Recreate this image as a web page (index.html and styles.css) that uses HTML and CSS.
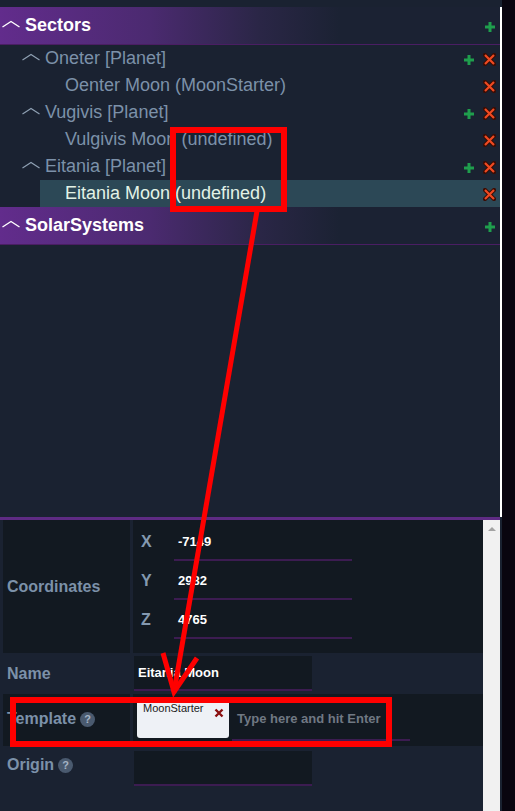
FILE: index.html
```html
<!DOCTYPE html>
<html>
<head>
<meta charset="utf-8">
<link rel="stylesheet" href="styles.css">
</head>
<body>
<div class="app">
  <div class="main">
    <div class="tree">
      <div class="tree-inner">
        <div class="group-head">
          <span class="chev"><svg width="18" height="8" viewBox="0 0 18 8"><polyline points="0.5,7 9,1.5 17.5,7" fill="none" stroke="#ffffff" stroke-width="1.4"/></svg></span>
          <span class="group-title">Sectors</span>
          <span class="actions">
            <svg class="ico" width="12" height="12" viewBox="0 0 12 12"><path d="M6 1v10M1 6h10" stroke="#1f9e4d" stroke-width="3"/></svg>
          </span>
        </div>

        <div class="node lvl1">
          <span class="chev"><svg width="18" height="8" viewBox="0 0 18 8"><polyline points="0.5,7 9,1.5 17.5,7" fill="none" stroke="#8fa0b3" stroke-width="1.2"/></svg></span>
          <span class="node-text">Oneter [Planet]</span>
          <span class="actions">
            <svg class="ico" width="12" height="12" viewBox="0 0 12 12"><path d="M6 1v10M1 6h10" stroke="#1f9e4d" stroke-width="3"/></svg>
            <svg class="ico" width="13" height="13" viewBox="0 0 13 13"><path d="M2 2l9 9M11 2l-9 9" stroke="#3a0d05" stroke-width="4.2" stroke-linecap="square"/><path d="M2 2l9 9M11 2l-9 9" stroke="#ef4a22" stroke-width="2.2"/></svg>
          </span>
        </div>
        <div class="node lvl2">
          <span class="chev"></span>
          <span class="node-text">Oenter Moon (MoonStarter)</span>
          <span class="actions">
            <svg class="ico" width="13" height="13" viewBox="0 0 13 13"><path d="M2 2l9 9M11 2l-9 9" stroke="#3a0d05" stroke-width="4.2" stroke-linecap="square"/><path d="M2 2l9 9M11 2l-9 9" stroke="#ef4a22" stroke-width="2.2"/></svg>
          </span>
        </div>
        <div class="node lvl1">
          <span class="chev"><svg width="18" height="8" viewBox="0 0 18 8"><polyline points="0.5,7 9,1.5 17.5,7" fill="none" stroke="#8fa0b3" stroke-width="1.2"/></svg></span>
          <span class="node-text">Vugivis [Planet]</span>
          <span class="actions">
            <svg class="ico" width="12" height="12" viewBox="0 0 12 12"><path d="M6 1v10M1 6h10" stroke="#1f9e4d" stroke-width="3"/></svg>
            <svg class="ico" width="13" height="13" viewBox="0 0 13 13"><path d="M2 2l9 9M11 2l-9 9" stroke="#3a0d05" stroke-width="4.2" stroke-linecap="square"/><path d="M2 2l9 9M11 2l-9 9" stroke="#ef4a22" stroke-width="2.2"/></svg>
          </span>
        </div>
        <div class="node lvl2">
          <span class="chev"></span>
          <span class="node-text">Vulgivis Moon (undefined)</span>
          <span class="actions">
            <svg class="ico" width="13" height="13" viewBox="0 0 13 13"><path d="M2 2l9 9M11 2l-9 9" stroke="#3a0d05" stroke-width="4.2" stroke-linecap="square"/><path d="M2 2l9 9M11 2l-9 9" stroke="#ef4a22" stroke-width="2.2"/></svg>
          </span>
        </div>
        <div class="node lvl1">
          <span class="chev"><svg width="18" height="8" viewBox="0 0 18 8"><polyline points="0.5,7 9,1.5 17.5,7" fill="none" stroke="#8fa0b3" stroke-width="1.2"/></svg></span>
          <span class="node-text">Eitania [Planet]</span>
          <span class="actions">
            <svg class="ico" width="12" height="12" viewBox="0 0 12 12"><path d="M6 1v10M1 6h10" stroke="#1f9e4d" stroke-width="3"/></svg>
            <svg class="ico" width="13" height="13" viewBox="0 0 13 13"><path d="M2 2l9 9M11 2l-9 9" stroke="#3a0d05" stroke-width="4.2" stroke-linecap="square"/><path d="M2 2l9 9M11 2l-9 9" stroke="#ef4a22" stroke-width="2.2"/></svg>
          </span>
        </div>
        <div class="node lvl2 selected">
          <span class="chev"></span>
          <span class="node-text">Eitania Moon (undefined)</span>
          <span class="actions">
            <svg class="ico" width="13" height="13" viewBox="0 0 13 13"><path d="M2 2l9 9M11 2l-9 9" stroke="#3a0d05" stroke-width="4.2" stroke-linecap="square"/><path d="M2 2l9 9M11 2l-9 9" stroke="#ef4a22" stroke-width="2.2"/></svg>
          </span>
        </div>

        <div class="group-head">
          <span class="chev"><svg width="18" height="8" viewBox="0 0 18 8"><polyline points="0.5,7 9,1.5 17.5,7" fill="none" stroke="#ffffff" stroke-width="1.4"/></svg></span>
          <span class="group-title">SolarSystems</span>
          <span class="actions">
            <svg class="ico" width="12" height="12" viewBox="0 0 12 12"><path d="M6 1v10M1 6h10" stroke="#1f9e4d" stroke-width="3"/></svg>
          </span>
        </div>
      </div>
    </div>

    <div class="divider"></div>

    <div class="props">
      <div class="props-body">
        <div class="prow dark">
          <div class="plabel">Coordinates</div>
          <div class="pval coords">
            <div class="coord"><span class="axis">X</span><span class="cinput">-7149</span></div>
            <div class="coord"><span class="axis">Y</span><span class="cinput">2982</span></div>
            <div class="coord"><span class="axis">Z</span><span class="cinput">4765</span></div>
          </div>
        </div>
        <div class="prow">
          <div class="plabel">Name</div>
          <div class="pval"><div class="tinput">Eitania Moon</div></div>
        </div>
        <div class="prow dark">
          <div class="plabel lift2">Template <span class="help">?</span></div>
          <div class="pval tags">
            <div class="chip">
              <span class="chip-text">MoonStarter</span>
              <svg class="chip-x" width="10" height="10" viewBox="0 0 10 10"><path d="M1.5 1.5l7 7M8.5 1.5l-7 7" stroke="#8a0f0f" stroke-width="2.4"/></svg>
            </div>
            <div class="tag-input">Type here and hit Enter</div>
          </div>
        </div>
        <div class="prow">
          <div class="plabel lift5">Origin <span class="help">?</span></div>
          <div class="pval"><div class="tinput origin"></div></div>
        </div>
      </div>
      <div class="scrollbar"><span class="arrow-up"></span></div>
    </div>
  </div>

  <svg class="annot" width="515" height="811" viewBox="0 0 515 811">
    <rect x="173" y="130" width="111" height="79" fill="none" stroke="#ff0000" stroke-width="6"/>
    <rect x="13" y="700" width="376" height="44" fill="none" stroke="#ff0000" stroke-width="6"/>
    <line x1="257" y1="211" x2="174" y2="692" stroke="#ff0000" stroke-width="5"/>
    <polyline points="163,653 174,692 197,658" fill="none" stroke="#ff0000" stroke-width="5" stroke-linejoin="miter"/>
  </svg>
</div>
</body>
</html>
```

FILE: styles.css
```css
html, body {
  margin: 0;
  padding: 0;
}
body {
  background: #09050f;
  font-family: "Liberation Sans", Arial, sans-serif;
  width: 515px;
  height: 811px;
  overflow: hidden;
}
.app {
  position: relative;
  display: flex;
  width: 515px;
  height: 811px;
}
.main {
  width: 502px;
  height: 811px;
  background: #1a2231;
  display: flex;
  flex-direction: column;
}
.tree {
  height: 517px;
  padding-top: 7px;
  box-sizing: border-box;
}
.tree-inner {
  height: 510px;
  border-right: 2px solid #ffffff;
  box-sizing: border-box;
}
.group-head {
  height: 38px;
  box-sizing: border-box;
  display: flex;
  align-items: center;
  background: linear-gradient(90deg, #622c8c 0%, #4b2a70 30%, #2a2646 52%, #1b2233 68%, #1b2233 100%);
  border-bottom: 1px solid #4a1e63;
}
.chev {
  width: 25px;
  flex: none;
  display: flex;
  align-items: center;
  padding-left: 2px;
  box-sizing: border-box;
}
.chev svg {
  display: block;
  margin-top: -3px;
}
.group-title {
  color: #ffffff;
  font-weight: bold;
  font-size: 18px;
}
.actions {
  margin-left: auto;
  display: flex;
  align-items: center;
  gap: 8px;
  padding-right: 4px;
  margin-top: 2px;
}
.ico {
  display: block;
}
.node {
  height: 27px;
  display: flex;
  align-items: center;
}
.lvl1 {
  margin-left: 20px;
}
.lvl2 {
  margin-left: 40px;
}
.node-text {
  color: #7c91a9;
  font-size: 18px;
  white-space: nowrap;
}
.selected {
  background: #2c4856;
}
.selected .node-text {
  color: #e2f2e6;
}
.divider {
  height: 3px;
  width: 500px;
  background: #5e2b83;
}
.props {
  height: 291px;
  display: flex;
}
.props-body {
  width: 483px;
  padding-left: 3px;
  box-sizing: border-box;
  display: flex;
  flex-direction: column;
  gap: 3px;
}
.prow {
  display: grid;
  grid-template-columns: 127px 1fr;
  column-gap: 3px;
}
.prow.dark .plabel,
.prow.dark .pval {
  background: #121921;
}
.plabel {
  display: flex;
  align-items: center;
  gap: 4px;
  padding-left: 4px;
  color: #7c91a9;
  font-weight: bold;
  font-size: 16px;
}
.plabel.lift2 {
  padding-bottom: 2px;
}
.plabel.lift5 {
  padding-bottom: 5px;
}
.help {
  width: 15px;
  height: 15px;
  border-radius: 50%;
  background: #4a5a6f;
  color: #a5b4c5;
  font-size: 11px;
  font-weight: bold;
  display: inline-flex;
  align-items: center;
  justify-content: center;
}
.coords {
  padding-top: 2px;
  padding-bottom: 14px;
}
.coord {
  display: flex;
  height: 39px;
  padding-left: 8px;
}
.axis {
  width: 33px;
  display: flex;
  align-items: center;
  color: #8499b0;
  font-weight: bold;
  font-size: 16px;
  padding-top: 1px;
}
.cinput {
  width: 178px;
  box-sizing: border-box;
  border-bottom: 2px solid #3c1c51;
  display: flex;
  align-items: center;
  padding-left: 4px;
  padding-top: 2px;
  color: #ffffff;
  font-weight: bold;
  font-size: 13px;
}
.tinput {
  width: 178px;
  height: 35px;
  box-sizing: border-box;
  margin-left: 1px;
  background: #121921;
  border-bottom: 2px solid #3c1c51;
  display: flex;
  align-items: center;
  padding-left: 4px;
  color: #ffffff;
  font-weight: bold;
  font-size: 13px;
}
.tinput.origin {
  margin-top: 2px;
}
.tags {
  display: flex;
  align-items: flex-start;
  padding: 5px 0 5px 4px;
}
.chip {
  width: 92px;
  height: 39px;
  box-sizing: border-box;
  background: #eef1f6;
  border-radius: 3px;
  display: flex;
  justify-content: space-between;
  align-items: flex-start;
  padding: 3px 5px 0 6px;
}
.chip-text {
  color: #222222;
  font-size: 11px;
  line-height: 13px;
}
.chip-x {
  display: block;
  margin-top: 6px;
}
.tag-input {
  width: 178px;
  height: 39px;
  margin-left: 3px;
  margin-top: 3px;
  box-sizing: border-box;
  border-bottom: 2px solid #3c1c51;
  display: flex;
  align-items: center;
  padding-left: 5px;
  padding-bottom: 5px;
  color: #707883;
  font-weight: bold;
  font-size: 13px;
  white-space: nowrap;
}
.scrollbar {
  width: 17px;
  background: #f1f1f1;
  display: flex;
  justify-content: center;
  padding-top: 7px;
  box-sizing: border-box;
}
.arrow-up {
  width: 0;
  height: 0;
  border-left: 4px solid transparent;
  border-right: 4px solid transparent;
  border-bottom: 4px solid #a3a3a3;
}
.annot {
  position: absolute;
  left: 0;
  top: 0;
  pointer-events: none;
}
```
